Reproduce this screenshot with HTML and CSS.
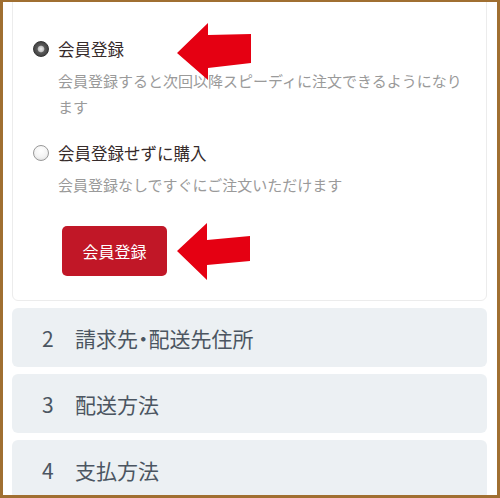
FILE: index.html
```html
<!DOCTYPE html>
<html lang="ja">
<head>
  <meta charset="UTF-8" />
  <meta name="viewport" content="width=device-width, initial-scale=1.0"/>
  <title>ご注文手続き</title>
  <link rel="stylesheet" href="styles.css">
</head>
<body>

  <div class="frame">
    <div class="card">
      <label class="option">
        <span class="radio radio-on"></span>
        <span class="option-title">会員登録</span>
      </label>
      <p class="option-desc">会員登録すると次回以降スピーディに注文できるようになります</p>

      <label class="option">
        <span class="radio"></span>
        <span class="option-title">会員登録せずに購入</span>
      </label>
      <p class="option-desc">会員登録なしですぐにご注文いただけます</p>

      <button class="btn-register">会員登録</button>

      <!-- annotation arrows -->
      <svg class="arrow arrow-top" width="76" height="60" viewBox="0 0 76 60">
        <polygon points="0,30 31,0 31,12 74,11 74,40 31,45 31,57" fill="#e50012"/>
      </svg>
      <svg class="arrow arrow-btn" width="76" height="60" viewBox="0 0 76 60">
        <polygon points="0,30 30,2 30,19 73,15 73,40 30,44 30,59" fill="#e50012"/>
      </svg>
    </div>

    <div class="step"><span class="step-num">2</span>請求先・配送先住所</div>
    <div class="step"><span class="step-num">3</span>配送方法</div>
    <div class="step"><span class="step-num">4</span>支払方法</div>
  </div>

</body>
</html>
```

FILE: styles.css
```css
body {
  margin: 0;
  font-family: "Noto Sans CJK JP", "Noto Sans", sans-serif;
  background: #fff;
}

.frame {
  width: 500px;
  height: 498px;
  box-sizing: border-box;
  border: 3px solid #a06f31;
  border-top-width: 2px;
  overflow: hidden;
  background: #fff;
  padding: 0 10px 0 9px;
}

.card {
  position: relative;
  margin-top: -10px;
  padding: 42px 0 24px 20px;
  border: 1px solid #ececec;
  border-radius: 6px;
  background: #fff;
}

.option {
  display: flex;
  align-items: center;
  gap: 9px;
  height: 28px;
}

.radio {
  flex-shrink: 0;
  width: 16px;
  height: 16px;
  border-radius: 50%;
  box-sizing: border-box;
  border: 1px solid #999;
  background: radial-gradient(circle at 50% 35%, #fff 0%, #f3f3f3 55%, #d6d6d6 100%);
}

.radio-on {
  border: 1px solid #333;
  background: radial-gradient(circle, #eee 0%, #c4c4c4 28%, #5a5a5a 38%, #444 70%, #7a7a7a 100%);
}

.option-title {
  font-size: 16.5px;
  color: #362b2b;
}

.option-desc {
  margin: 5px 0 19px 25px;
  max-width: 418px;
  font-size: 15px;
  line-height: 26px;
  color: #9a9a9a;
}

.btn-register {
  display: block;
  margin: 28px 0 0 29px;
  width: 105px;
  height: 50px;
  border: none;
  border-radius: 5px;
  background: #c11727;
  color: #fff;
  font-family: inherit;
  font-size: 16px;
  cursor: pointer;
}

.arrow {
  position: absolute;
}

.arrow-top {
  left: 164px;
  top: 30px;
}

.arrow-btn {
  left: 164px;
  top: 228px;
}

.step {
  display: flex;
  align-items: center;
  height: 59px;
  margin-top: 7px;
  padding-left: 30px;
  border-radius: 6px;
  background: #ecf0f3;
  font-size: 21px;
  color: #4b5561;
  font-feature-settings: "palt";
}

.step-num {
  width: 33px;
}
```
